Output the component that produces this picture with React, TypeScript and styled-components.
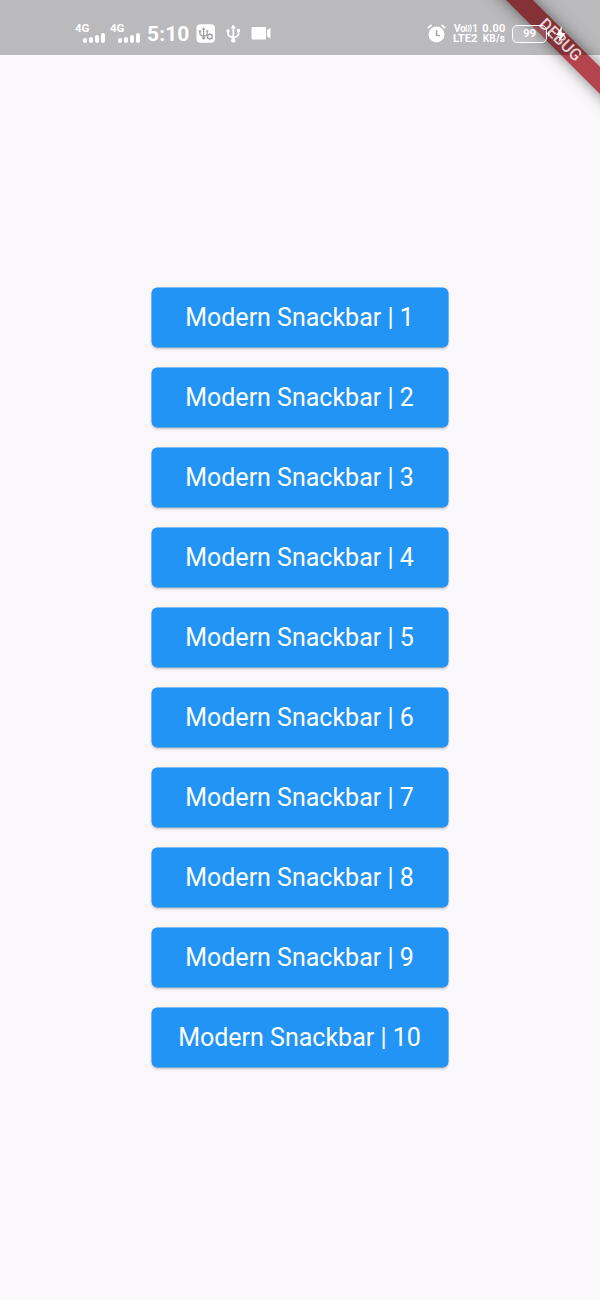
import React from "react";
import styled, { createGlobalStyle } from "styled-components";

const GlobalStyle = createGlobalStyle`
  * { box-sizing: border-box; }
  body { margin: 0; background: #faf8fb; font-family: Roboto, sans-serif; }
`;

const Screen = styled.div`
  position: relative;
  width: 600px;
  height: 1300px;
  overflow: hidden;
  background: #faf8fb;
`;

const StatusBar = styled.header`
  position: relative;
  z-index: 2;
  display: flex;
  justify-content: space-between;
  height: 55px;
  padding: 20px 34px 0 75px;
  background: rgba(0, 0, 0, 0.255);
  color: #fff;
`;

const Group = styled.div`
  display: flex;
  align-items: center;
  height: 27px;
`;

const Signal = styled.div<{ $width: number }>`
  display: flex;
  flex-direction: column;
  width: ${(p) => p.$width}px;
  height: 21px;
  font-size: 11.5px;
  line-height: 10px;
  font-weight: 700;
`;

const Bars = styled.div`
  display: flex;
  align-items: flex-end;
  gap: 2px;
  height: 10px;
  padding-left: 8px;
`;

const Bar = styled.i<{ $height: number }>`
  width: 4px;
  height: ${(p) => p.$height}px;
  border-radius: 2px;
  background: #fff;
`;

const Clock = styled.time`
  width: 43px;
  font-size: 21px;
  line-height: 28px;
  font-weight: 700;
  letter-spacing: 0.1px;
`;

const LeftIcons = styled.svg`
  margin-left: 6px;
`;

const Speed = styled.div`
  display: flex;
  flex-direction: column;
  align-items: center;
  width: 24px;
  margin: 0 6px 0 3px;
  font-size: 10px;
  line-height: 10px;
  font-weight: 700;
  letter-spacing: 0.2px;
  white-space: nowrap;
`;

const SpeedValue = styled.span`
  font-size: 11px;
  letter-spacing: 0.3px;
`;

const Battery = styled.div`
  width: 35px;
  height: 18px;
  border: 1.5px solid #fff;
  border-radius: 5px;
  background: rgba(255, 255, 255, 0.16);
  font-size: 11.5px;
  line-height: 15px;
  font-weight: 700;
  text-align: center;
`;

const Ribbon = styled.div`
  position: absolute;
  z-index: 1;
  left: 459.8px;
  top: 31.4px;
  width: 200px;
  height: 19px;
  transform: rotate(45deg);
  background: #b3434c;
  box-shadow: 0 0 15px rgba(0, 0, 0, 0.5);
`;

const RibbonText = styled.div`
  position: absolute;
  z-index: 3;
  left: 510px;
  top: 31.3px;
  width: 100px;
  transform: rotate(45deg);
  color: rgba(255, 255, 255, 0.78);
  font-size: 16.5px;
  line-height: 18.4px;
  font-weight: 500;
  text-align: center;
`;

const ButtonList = styled.main`
  display: flex;
  flex-direction: column;
  align-items: center;
  gap: 21px;
  padding-top: 233px;
`;

const SnackButton = styled.button`
  width: 296px;
  height: 59px;
  padding: 0 1px 0 0;
  border: 0;
  border-radius: 5.5px;
  background: #2294f5;
  box-shadow: 0 0 0 0.5px #2294f5, 0 2px 3px rgba(0, 0, 0, 0.22), 0 0 2px rgba(0, 0, 0, 0.25);
  color: #fff;
  font: 400 25px/59px Roboto, sans-serif;
`;

const SignalMeter = ({ width }: { width: number }) => (
  <Signal $width={width}>
    4G
    <Bars>
      {[5, 6, 8, 10].map((h) => (
        <Bar key={h} $height={h} />
      ))}
    </Bars>
  </Signal>
);

const UsbGlyph = () => (
  <g fill="none" stroke="currentColor" strokeWidth="1.7">
    <path d="M8 3v12M2.8 7v2.5q0 2.5 5.2 3.5M13.2 6v3.5q0 2.5-5.2 3.5" />
    <path d="M8 0 5.3 4h5.4zM11.8 4.5h2.8v2.8h-2.8z" fill="currentColor" stroke="none" />
    <circle cx="2.8" cy="6.3" r="1.7" fill="currentColor" stroke="none" />
    <circle cx="8" cy="15.8" r="2.2" fill="currentColor" stroke="none" />
  </g>
);

export default function App() {
  return (
    <Screen>
      <GlobalStyle />
      <Ribbon />
      <StatusBar>
        <Group>
          <SignalMeter width={35} />
          <SignalMeter width={37} />
          <Clock>5:10</Clock>
          <LeftIcons width="80" height="20" viewBox="0 0 80 20">
            <rect x="0.5" y="0.3" width="18.5" height="18.5" rx="4" fill="#fff" />
            <g color="#a09ea0" transform="translate(2 3) scale(.7)">
              <UsbGlyph />
            </g>
            <circle cx="13.8" cy="12.6" r="2.3" fill="#fff" stroke="#a09ea0" strokeWidth="1.3" />
            <path
              d="M13.8 9.2v1.3M13.8 14.8v1.3M10.8 10.9l1 .6M15.8 13.8l1 .6M10.8 14.4l1-.6M15.8 11.4l1-.6"
              stroke="#a09ea0"
              strokeWidth="1"
            />
            <g color="#fff" transform="translate(29.3 .6)">
              <UsbGlyph />
            </g>
            <rect x="55.5" y="3" width="14.5" height="12.5" rx="1" fill="#fff" />
            <path d="m71 6 3.5-2v10.5L71 12.5z" fill="#fff" />
          </LeftIcons>
        </Group>
        <Group>
          <svg width="26" height="20" viewBox="0 0 26 20">
            <circle cx="9.5" cy="10.4" r="8" fill="#fff" />
            <path d="M.8 4 4.6 .8M18.2 4 14.4 .8" stroke="#fff" strokeWidth="1.7" />
            <path d="M9.5 6.2v5.3H13" fill="none" stroke="#aaa8aa" strokeWidth="1.6" />
          </svg>
          <svg
            width="26"
            height="22"
            viewBox="0 0 26 22"
            fill="#fff"
            fontFamily="Roboto, sans-serif"
            fontWeight="700"
          >
            <text x="1" y="9" fontSize="10" textLength="12">
              Vo
            </text>
            <path
              d="M13.3 1.8v7M15 2q2 3.2 0 6.6M17 1.4q2.4 3.8 0 7.8"
              fill="none"
              stroke="#fff"
              strokeWidth="1.1"
            />
            <text x="19.3" y="9" fontSize="10">
              1
            </text>
            <text x="0" y="19.2" fontSize="10" textLength="24.5" lengthAdjust="spacingAndGlyphs">
              LTE2
            </text>
          </svg>
          <Speed>
            <SpeedValue>0.00</SpeedValue>
            <span>KB/s</span>
          </Speed>
          <Battery>99</Battery>
          <svg width="19" height="18" viewBox="0 0 19 18">
            <path d="M1 6v6q3-3 0-6" fill="#fff" />
            <path d="M15 1 9 10h4l-1.5 7.5 7-9.5h-4z" fill="#fff" />
          </svg>
        </Group>
      </StatusBar>
      <RibbonText>DEBUG</RibbonText>
      <ButtonList>
        {Array.from({ length: 10 }, (_, i) => (
          <SnackButton key={i}>Modern Snackbar | {i + 1}</SnackButton>
        ))}
      </ButtonList>
    </Screen>
  );
}
